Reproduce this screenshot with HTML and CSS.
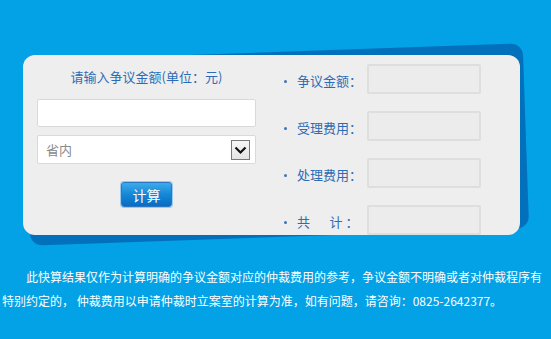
FILE: index.html
```html
<!DOCTYPE html>
<html lang="zh-CN">
<head>
    <meta charset="UTF-8">
    <title>仲裁费用计算</title>
    <link rel="stylesheet" href="styles.css">
</head>
<body>
    <div class="stage">
        <div class="panel-back"></div>
        <div class="panel">
            <div class="input-side">
                <h3 class="title">请输入争议金额(单位：元)</h3>
                <input type="text" class="amount" id="amount">
                <div class="select-wrap">
                    <select class="region" id="region">
                        <option>省内</option>
                        <option>省外</option>
                    </select>
                    <span class="select-arrow">
                        <svg width="13" height="9" viewBox="0 0 13 9"><polyline points="1.5,1.5 6.5,6.5 11.5,1.5" fill="none" stroke="#111" stroke-width="2.2"/></svg>
                    </span>
                </div>
                <button class="calc-btn">计算</button>
            </div>
            <ul class="result-list">
                <li><span class="label">争议金额：</span><input type="text" class="result" readonly></li>
                <li><span class="label">受理费用：</span><input type="text" class="result" readonly></li>
                <li><span class="label">处理费用：</span><input type="text" class="result" readonly></li>
                <li><span class="label">共&emsp;&ensp;计&nbsp;：</span><input type="text" class="result" readonly></li>
            </ul>
        </div>
    </div>
    <p class="note">此快算结果仅作为计算明确的争议金额对应的仲裁费用的参考，争议金额不明确或者对仲裁程序有特别约定的， 仲裁费用以申请仲裁时立案室的计算为准，如有问题，请咨询：0825-2642377。</p>
</body>
</html>
```

FILE: styles.css
```css
body {
    margin: 0;
    background-color: #03a1e6;
    font-family: "Microsoft YaHei", "Noto Sans CJK SC", sans-serif;
    font-size: 12px;
}
.stage {
    position: relative;
    margin: 55px 0 0 23px;
    width: 497px;
    height: 180px;
}
.panel-back {
    position: absolute;
    left: 4px;
    top: -3px;
    width: 499px;
    height: 185px;
    background-color: #0270bb;
    border-radius: 12px;
    transform: rotate(-2deg);
}
.panel {
    position: relative;
    display: flex;
    height: 180px;
    padding-left: 14px;
    background-color: #eeeeee;
    border-radius: 12px;
    box-sizing: border-box;
}
.input-side {
    width: 219px;
}
.title {
    margin: 12px 0 12px;
    font-size: 13px;
    font-weight: normal;
    line-height: 20px;
    color: #2d6cb4;
    text-align: center;
}
.amount {
    display: block;
    width: 219px;
    height: 28px;
    margin: 0;
    border: 1px solid #d9d9d9;
    border-radius: 2px;
    background-color: #fff;
    box-sizing: border-box;
}
.select-wrap {
    position: relative;
    margin-top: 8px;
    height: 29px;
}
.region {
    width: 100%;
    height: 29px;
    margin: 0;
    padding-left: 8px;
    border: 1px solid #d9d9d9;
    border-radius: 2px;
    background-color: #fff;
    color: #8a8a8a;
    font-family: inherit;
    font-size: 13px;
    appearance: none;
    -webkit-appearance: none;
    box-sizing: border-box;
}
.select-arrow {
    position: absolute;
    right: 6px;
    top: 5px;
    width: 19px;
    height: 20px;
    display: flex;
    justify-content: center;
    align-items: center;
    border: 1px solid #7a7a7a;
    background: linear-gradient(#f7f7f7, #e4e4e4);
    box-sizing: border-box;
    pointer-events: none;
}
.calc-btn {
    display: block;
    width: 51px;
    height: 25px;
    margin: 18px auto 0;
    padding: 0;
    border: 1px solid #2a78c4;
    border-radius: 3px;
    background: linear-gradient(#3eaaea, #1487d6 50%, #0a6cc0);
    box-shadow: 0 0 0 1px #9cc9ec;
    color: #fff;
    font-family: inherit;
    font-size: 14px;
    line-height: 22px;
    cursor: pointer;
}
.result-list {
    list-style: none;
    margin: 0 0 0 28px;
    padding: 9px 0 0 0;
}
.result-list li {
    display: flex;
    align-items: center;
    height: 30px;
    margin-bottom: 17px;
}
.result-list li::before {
    content: "";
    width: 3px;
    height: 3px;
    margin: 4px 10px 0 0;
    border-radius: 50%;
    background-color: #3f74b8;
}
.label {
    width: 70px;
    padding-top: 3px;
    font-size: 13px;
    color: #2d6cb4;
    white-space: nowrap;
}
.result {
    width: 114px;
    height: 30px;
    margin: 0;
    border: 2px solid #dedede;
    border-radius: 2px;
    background-color: #ececec;
    box-sizing: border-box;
}
.note {
    width: 545px;
    margin: 30px 0 0;
    padding-left: 2px;
    color: #fff;
    font-size: 12px;
    line-height: 24px;
    text-indent: 24px;
}
```
